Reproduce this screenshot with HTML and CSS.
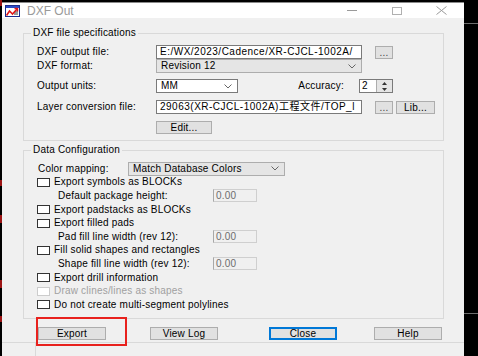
FILE: index.html
```html
<!DOCTYPE html>
<html lang="en">
<head>
  <meta charset="UTF-8">
  <title>DXF Out</title>
  <link rel="stylesheet" href="styles.css">
</head>
<body>
  <div class="window">
    <div class="titlebar">
      <svg class="app-icon" width="15" height="12" viewBox="0 0 15 12">
        <rect x="0.5" y="0.5" width="14" height="11" fill="#fff" stroke="#1c2c8c"/>
        <rect x="1" y="1" width="13" height="2" fill="#2a4cc8"/>
        <rect x="9" y="6" width="4" height="4" fill="#9a9a9a"/>
        <polyline points="1.5,10.5 4.5,6 7.5,9 12.5,3.5" fill="none" stroke="#e01818" stroke-width="1.6"/>
        <polyline points="9.5,3.5 12.5,3.5 12.5,6.5" fill="none" stroke="#e01818" stroke-width="1.4"/>
      </svg>
      <span class="caption">DXF Out</span>
      <div class="caption-buttons">
        <span class="cap-btn"><svg width="10" height="1"><rect width="10" height="1" fill="#9a9a9a"/></svg></span>
        <span class="cap-btn"><svg width="10" height="8"><rect x="0.5" y="0.5" width="9" height="7" fill="none" stroke="#b0b0b0"/></svg></span>
        <span class="cap-btn"><svg width="11" height="9"><path d="M0.5 0.5 L10.5 8.5 M10.5 0.5 L0.5 8.5" stroke="#9a9a9a" fill="none"/></svg></span>
      </div>
    </div>

    <div class="content">
      <div class="group spec">
        <span class="group-title">DXF file specifications</span>

        <div class="row">
          <span class="lbl">DXF output file:</span>
          <div class="field wide">E:/WX/2023/Cadence/XR-CJCL-1002A/</div>
          <div class="btn dots">...</div>
        </div>
        <div class="row">
          <span class="lbl">DXF format:</span>
          <div class="select grey wide"><span>Revision 12</span><svg class="chev" width="8" height="5"><polyline points="0.5,0.5 4,4 7.5,0.5" fill="none" stroke="#666"/></svg></div>
        </div>
        <div class="row units">
          <span class="lbl">Output units:</span>
          <div class="select mm"><span>MM</span><svg class="chev" width="8" height="5"><polyline points="0.5,0.5 4,4 7.5,0.5" fill="none" stroke="#666"/></svg></div>
          <span class="acc-lbl">Accuracy:</span>
          <div class="spinner">
            <div class="spin-val">2</div>
            <div class="spin-arrows">
              <svg width="5" height="3"><polygon points="0,3 2.5,0 5,3" fill="#333"/></svg>
              <svg width="5" height="3"><polygon points="0,0 2.5,3 5,0" fill="#333"/></svg>
            </div>
          </div>
        </div>
        <div class="row layer">
          <span class="lbl">Layer conversion file:</span>
          <div class="field wide">29063(XR-CJCL-1002A)工程文件/TOP_l</div>
          <div class="btn dots">...</div>
          <div class="btn lib">Lib...</div>
        </div>
        <div class="row edit-row">
          <div class="btn edit">Edit...</div>
        </div>
      </div>

      <div class="group data">
        <span class="group-title">Data Configuration</span>

        <div class="drow">
          <span class="map-lbl">Color mapping:</span>
          <div class="select grey colors"><span>Match Database Colors</span><svg class="chev" width="8" height="5"><polyline points="0.5,0.5 4,4 7.5,0.5" fill="none" stroke="#666"/></svg></div>
        </div>
        <div class="drow"><span class="cb"></span>Export symbols as BLOCKs</div>
        <div class="drow sub"><span class="sub-lbl">Default package height:</span><div class="num">0.00</div></div>
        <div class="drow"><span class="cb"></span>Export padstacks as BLOCKs</div>
        <div class="drow"><span class="cb"></span>Export filled pads</div>
        <div class="drow sub"><span class="sub-lbl">Pad fill line width (rev 12):</span><div class="num">0.00</div></div>
        <div class="drow"><span class="cb"></span>Fill solid shapes and rectangles</div>
        <div class="drow sub"><span class="sub-lbl">Shape fill line width (rev 12):</span><div class="num">0.00</div></div>
        <div class="drow"><span class="cb"></span>Export drill information</div>
        <div class="drow disabled"><span class="cb"></span>Draw clines/lines as shapes</div>
        <div class="drow"><span class="cb"></span>Do not create multi-segment polylines</div>
      </div>
    </div>

    <div class="actions">
      <div class="btn action">Export</div>
      <div class="btn action viewlog">View Log</div>
      <div class="btn action close">Close</div>
      <div class="btn action help">Help</div>
    </div>

    <div class="statusbar">
      <span class="status-cell"></span>
    </div>

    <div class="annotation"></div>
  </div>
</body>
</html>
```

FILE: styles.css
```css
* {
  box-sizing: border-box;
}

html, body {
  margin: 0;
}

body {
  width: 478px;
  height: 356px;
  overflow: hidden;
  font-family: "Liberation Sans", Arial, "Noto Sans CJK SC", sans-serif;
  font-size: 10px;
  line-height: 12px;
  letter-spacing: 0.2px;
  color: #000;
  background:
    linear-gradient(#6e6e6e, #6e6e6e) 464px 23px / 14px 1px no-repeat,
    linear-gradient(#6e6e6e, #6e6e6e) 464px 313px / 14px 1px no-repeat,
    linear-gradient(#9c1414, #9c1414) 0 0 / 2px 6px no-repeat,
    linear-gradient(#9c1414, #9c1414) 0 180px / 2px 6px no-repeat,
    linear-gradient(#9c1414, #9c1414) 0 215px / 2px 8px no-repeat,
    linear-gradient(#9c1414, #9c1414) 0 280px / 2px 8px no-repeat,
    linear-gradient(#9c1414, #9c1414) 0 316px / 2px 6px no-repeat,
    #000;
}

.window {
  position: relative;
  margin: 2px 0 0 2px;
  width: 462px;
  height: 354px;
  background: #f0f0f0;
  border-top: 1px solid #8a8a8a;
}

/* title bar */
.titlebar {
  display: flex;
  align-items: center;
  height: 15px;
  background: #fff;
}

.app-icon {
  margin-left: 3px;
}

.caption {
  margin-left: 7px;
  font-size: 12px;
  letter-spacing: 0;
  color: #9a9a9a;
}

.caption-buttons {
  display: flex;
  margin-left: auto;
}

.cap-btn {
  display: flex;
  align-items: center;
  justify-content: center;
  width: 45px;
  height: 15px;
}

/* groups */
.content {
  padding: 15px 0 0 21px;
}

.group {
  position: relative;
  width: 421px;
  border: 1px solid #d9d9d9;
  padding-left: 13px;
}

.group-title {
  position: absolute;
  top: -7px;
  left: 7px;
  padding: 0 2px;
  background: #f0f0f0;
}

.spec {
  padding-top: 11px;
  padding-bottom: 6px;
}

.data {
  margin-top: 9px;
  padding-top: 11px;
  padding-bottom: 6px;
}

.row {
  display: flex;
  align-items: center;
  height: 14px;
}

.row.units {
  margin-top: 6px;
}

.row.layer,
.row.edit-row {
  margin-top: 7px;
}

.edit-row {
  height: 13px;
  padding-left: 119px;
}

.lbl {
  width: 119px;
  flex: none;
}

/* controls */
.field {
  height: 14px;
  border: 1px solid #7a7a7a;
  background: #fff;
  padding-left: 3px;
  overflow: hidden;
  white-space: nowrap;
  letter-spacing: 0.5px;
}

.wide {
  width: 206px;
}

.select {
  display: flex;
  align-items: center;
  justify-content: space-between;
  height: 14px;
  padding: 0 5px 0 4px;
  border: 1px solid #7a7a7a;
  background: #fff;
  white-space: nowrap;
}

.select.grey {
  background: #e5e5e5;
  border-color: #adadad;
}

.mm {
  width: 82px;
}

.colors {
  width: 157px;
}

.acc-lbl {
  width: 106px;
  margin-right: 15px;
  text-align: right;
}

.spinner {
  display: flex;
  height: 14px;
  border: 1px solid #7a7a7a;
  background: #fff;
}

.spin-val {
  width: 16px;
  padding-left: 2px;
}

.spin-arrows {
  display: flex;
  flex-direction: column;
  align-items: center;
  justify-content: space-around;
  width: 16px;
  background: #e5e5e5;
  border-left: 1px solid #adadad;
}

.btn {
  display: flex;
  align-items: center;
  justify-content: center;
  height: 13px;
  border: 1px solid #adadad;
  background: #e1e1e1;
  line-height: 11px;
}

.dots {
  width: 18px;
  margin-left: 13px;
  color: #444;
}

.lib {
  width: 39px;
  margin-left: 3px;
}

.edit {
  width: 56px;
}

/* data configuration rows */
.drow {
  display: flex;
  align-items: center;
  height: 13.6px;
}

.map-lbl {
  width: 91px;
  padding-left: 1px;
}

.cb {
  width: 13px;
  height: 9px;
  margin-right: 4px;
  border: 1px solid #333;
  background: #fff;
}

.drow.disabled {
  color: #a0a0a0;
}

.drow.disabled .cb {
  border-color: #cccccc;
}

.sub {
  padding-left: 21px;
}

.sub-lbl {
  width: 155px;
}

.num {
  width: 44px;
  height: 13px;
  padding-left: 2px;
  border: 1px solid #cfcfcf;
  border-left-color: #a8a8a8;
  background: #f0f0f0;
  color: #6d6d6d;
  line-height: 11px;
}

/* bottom buttons */
.actions {
  display: flex;
  margin-top: 8px;
  padding-left: 36px;
}

.action {
  width: 68px;
}

.viewlog {
  margin-left: 44px;
}

.close {
  margin-left: 51px;
  border: 2px solid #0078d7;
}

.help {
  margin-left: 37px;
}

.statusbar {
  display: flex;
  height: 14px;
  margin-top: 2px;
  border-top: 1px solid #d9d9d9;
}

.status-cell {
  width: 34px;
  border-right: 1px solid #d9d9d9;
}

.annotation {
  position: absolute;
  left: 34px;
  top: 314px;
  width: 91px;
  height: 29px;
  border: 2px solid #e8211d;
}
```
